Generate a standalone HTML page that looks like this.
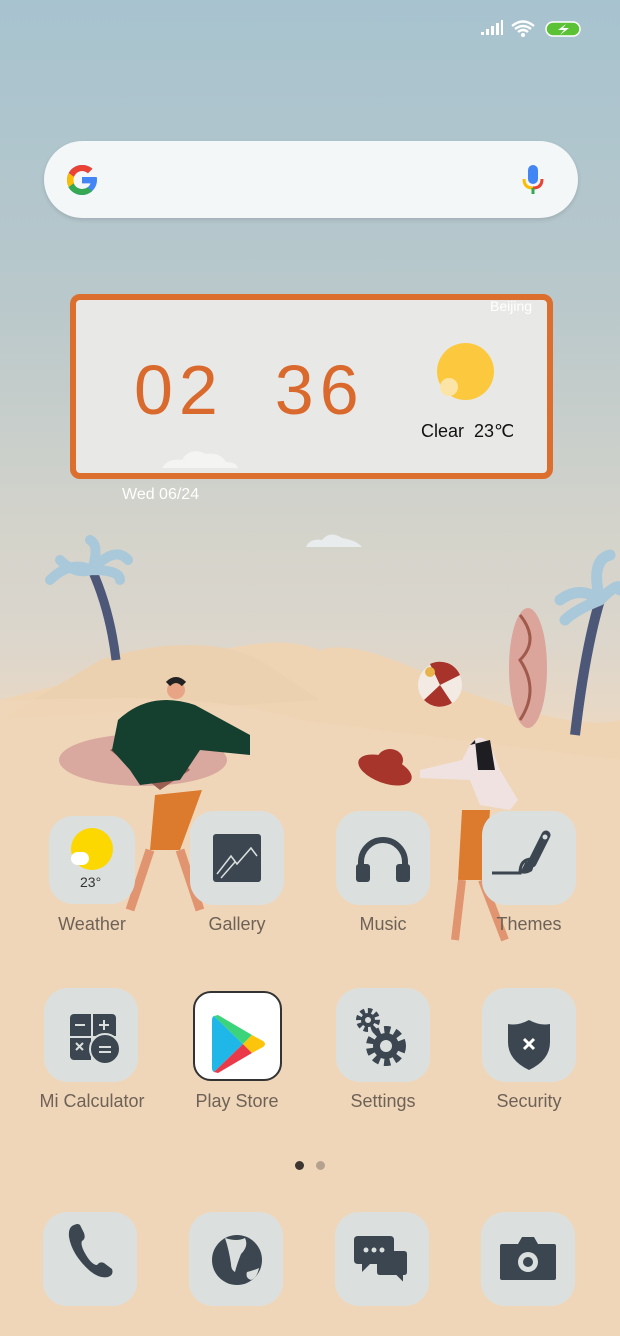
<!DOCTYPE html>
<html><head><meta charset="utf-8"><style>
*{margin:0;padding:0;box-sizing:border-box}
body{width:620px;height:1336px;overflow:hidden;position:relative;font-family:"Liberation Sans",sans-serif;
background:linear-gradient(180deg,#a7c3cf 0px,#b9c8cb 300px,#d3d3cb 520px,#dcd6cc 640px,#efd9c0 760px,#f3d8ba 1000px,#f6d6b5 1336px)}
.abs{position:absolute}
.tile{position:absolute;width:94px;height:94px;border-radius:24px;background:#dbe0de}
.lbl{position:absolute;width:150px;text-align:center;font-size:18px;color:#6e6258}
</style></head><body>
<!-- scene -->
<svg class="abs" style="left:0;top:0" width="620" height="1336">
<path d="M0 700 C80 680 150 660 220 650 C270 640 290 640 320 650 C350 640 400 660 460 690 C520 710 580 730 620 720 L620 1336 L0 1336Z" fill="#efd4b4"/>
<path d="M100 660 C160 640 220 640 260 660 L320 700 L0 720Z" fill="#ecd1b0"/>
<path d="M0 700 C100 700 200 690 300 720 L620 760 L620 1336 L0 1336Z" fill="#f1d7b9" opacity=".7"/>
<path d="M306 547 Q310 538 322 540 Q330 530 342 538 Q356 540 362 547Z" fill="#e8ecec"/>
<path d="M160 468 Q165 455 180 457 Q190 443 205 455 Q220 455 238 467Z" fill="#eef0ee"/>
<!-- palms -->
<path d="M92 570 Q110 610 116 660" stroke="#4d5878" stroke-width="9" fill="none"/>
<path d="M92 570 Q70 560 50 580 M92 570 Q100 545 90 540 M92 570 Q115 545 128 560 M92 570 Q120 570 120 580 M92 570 Q75 575 60 560" stroke="#a9c8d9" stroke-width="10" fill="none" stroke-linecap="round"/>
<path d="M600 600 Q585 650 575 735" stroke="#4d5878" stroke-width="10" fill="none"/>
<path d="M600 600 Q580 585 560 600 M600 600 Q590 560 610 555 M600 600 Q620 580 620 590 M600 600 Q575 610 565 620" stroke="#a9c8d9" stroke-width="11" fill="none" stroke-linecap="round"/>
<!-- surfboard right -->
<ellipse cx="528" cy="668" rx="19" ry="60" fill="#dba59b"/>
<path d="M520 615 Q540 640 520 660 Q540 690 520 720" stroke="#a05a4c" stroke-width="3" fill="none"/>
<!-- ball -->
<circle cx="440" cy="685" r="22" fill="#f3ebe3"/>
<path d="M440 685 L430 664 A22 22 0 0 1 460 675Z M440 685 L452 703 A22 22 0 0 1 424 700Z" fill="#a7332a"/>
<circle cx="430" cy="672" r="5" fill="#e8b34a"/>
<!-- man -->
<ellipse cx="143" cy="760" rx="84" ry="26" fill="#d9a89e"/>
<path d="M110 750 Q150 730 190 770 L160 790Z" fill="#9a5e52"/>
<path d="M155 795 L150 850 L180 850 L202 790Z" fill="#dc7a2e"/>
<path d="M150 850 L130 910 M180 850 L200 910" stroke="#e09570" stroke-width="9"/>
<path d="M118 720 Q150 690 195 705 L250 735 L250 755 L200 750 L180 780 L140 785 L130 770 L112 750Z" fill="#153f2f"/>
<circle cx="176" cy="690" r="9" fill="#e8a585"/><path d="M168 684 Q176 676 184 684" stroke="#222" stroke-width="6" fill="none"/>
<!-- woman -->
<path d="M470 745 Q480 730 490 745 L500 770 L518 800 L510 810 L480 805 L470 780 L420 778 L420 770 L462 760Z" fill="#efe2e0"/>
<path d="M470 745 L475 740 L478 770 L495 770 L490 740 Z" fill="#1e1d22"/>
<path d="M462 810 L458 880 L485 880 L490 810Z" fill="#dc7a2e"/>
<path d="M462 880 L455 940 M482 880 L505 940" stroke="#e09570" stroke-width="8"/>
<ellipse cx="385" cy="770" rx="28" ry="13" fill="#a7352b" transform="rotate(20 385 770)"/>
<ellipse cx="390" cy="760" rx="13" ry="11" fill="#a7352b"/>
</svg>

<!-- status bar -->
<svg class="abs" style="left:478px;top:18px" width="110" height="22">
<path d="M3 17h3v-3H3zM8 17h3v-6H8zM13 17h3v-9h-3zM18 17h3v-12h-3zM23 17h2v-15h-2z" fill="#fff"/>
<path d="M34 8 Q45 -1 56 8 M37 11 Q45 5 53 11 M40 14 Q45 10 50 14" stroke="#fff" stroke-width="2.4" fill="none"/><circle cx="45" cy="17" r="2" fill="#fff"/>
<rect x="68" y="4" width="34" height="14" rx="7" fill="#5bc236" stroke="#fff" stroke-width="1.5"/>
<path d="M88 6 L80 12 L86 12 L82 17 L91 10 L85 10Z" fill="#fff"/>
</svg>

<!-- search -->
<div class="abs" style="left:44px;top:141px;width:534px;height:77px;border-radius:39px;background:#f4f7f8;box-shadow:0 2px 4px rgba(0,0,0,.12)"></div>
<svg class="abs" style="left:64px;top:162px" width="36" height="36" viewBox="0 0 48 48">
<path d="M43.6 20H24v8.5h11.3C34 33 29.6 36 24 36c-6.6 0-12-5.4-12-12s5.4-12 12-12c3 0 5.8 1.1 7.9 3l6-6C34.3 5.7 29.4 4 24 4 13 4 4 13 4 24s9 20 20 20 20-9 20-20c0-1.3-.1-2.7-.4-4z" fill="#4285f4"/>
<path d="M6.3 14.7l7 5.1C15 15.6 19.1 12 24 12c3 0 5.8 1.1 7.9 3l6-6C34.3 5.7 29.4 4 24 4 16.3 4 9.7 8.3 6.3 14.7z" fill="#ea4335"/>
<path d="M24 44c5.2 0 9.9-2 13.4-5.2l-6.2-5.2C29.2 35.1 26.7 36 24 36c-5.2 0-9.6-3.3-11.3-8l-7 5.4C9.1 39.6 16 44 24 44z" fill="#34a853"/>
<path d="M6.3 14.7l7 5.1c-.8 2.2-.8 5 0 8.2l-7 5.4C4.8 30.5 4 27.3 4 24s.8-6.5 2.3-9.3z" fill="#fbbc05"/>
</svg>
<svg class="abs" style="left:521px;top:163px" width="24" height="34">
<rect x="7" y="2" width="10" height="19" rx="5" fill="#4285f4"/>
<path d="M3 16 Q3 25 12 25" stroke="#fbbc05" stroke-width="3" fill="none"/><path d="M21 16 Q21 25 12 25" stroke="#ea4335" stroke-width="3" fill="none"/>
<rect x="10.5" y="25" width="3" height="6" fill="#34a853"/>
</svg>

<!-- clock widget -->
<div class="abs" style="left:70px;top:294px;width:483px;height:185px;border:6px solid #dc6f2e;border-radius:10px;background:#e8e9e7"></div>
<div class="abs" style="left:490px;top:298px;font-size:14px;color:#fff">Beijing</div>
<div class="abs" style="left:134px;top:350px;font-size:70px;color:#d9692c;letter-spacing:6px;font-weight:300">02&nbsp;&nbsp;36</div>
<div class="abs" style="left:437px;top:343px;width:57px;height:57px;border-radius:50%;background:#fcc93e"></div>
<div class="abs" style="left:440px;top:378px;width:18px;height:18px;border-radius:50%;background:#fbe4a6"></div>
<div class="abs" style="left:421px;top:421px;font-size:18px;color:#111">Clear&nbsp; 23℃</div>
<svg class="abs" style="left:160px;top:444px" width="80" height="26"><path d="M2 24 Q8 14 22 16 Q30 2 46 10 Q60 8 66 18 Q76 18 78 24Z" fill="#f4f4f2"/></svg>
<div class="abs" style="left:122px;top:486px;font-size:16px;color:#fff">Wed 06/24</div>

<!-- row 1 -->
<div class="tile" style="left:49px;top:816px;width:86px;height:88px"></div>
<div class="abs" style="left:71px;top:828px;width:42px;height:42px;border-radius:50%;background:#fdd700"></div>
<div class="abs" style="left:71px;top:852px;width:18px;height:13px;border-radius:8px;background:#fff"></div>
<div class="abs" style="left:80px;top:874px;font-size:14px;color:#333">23°</div>
<div class="tile" style="left:190px;top:811px"></div>
<svg class="abs" style="left:213px;top:834px" width="48" height="48"><rect x="0" y="0" width="48" height="48" rx="3" fill="#3b4650"/><path d="M4 40 L18 22 L24 30 L38 14 L44 22 M8 44 L22 28" stroke="#dbe0de" stroke-width="1.5" fill="none"/></svg>
<div class="tile" style="left:336px;top:811px"></div>
<svg class="abs" style="left:353px;top:834px" width="60" height="50"><path d="M8 34 V28 A22 22 0 0 1 52 28 V34" stroke="#3b4650" stroke-width="6" fill="none"/><rect x="3" y="30" width="14" height="18" rx="3" fill="#3b4650"/><rect x="43" y="30" width="14" height="18" rx="3" fill="#3b4650"/></svg>
<div class="tile" style="left:482px;top:811px"></div>
<svg class="abs" style="left:490px;top:829px" width="70" height="52"><path d="M56 6 L42 34" stroke="#3b4650" stroke-width="9" stroke-linecap="round"/><circle cx="55" cy="8" r="2.5" fill="#dbe0de"/><path d="M42 30 Q30 30 30 44 L2 44" stroke="#3b4650" stroke-width="3" fill="none"/><path d="M36 32 Q46 34 42 42 Q36 46 30 44Z" fill="#3b4650"/></svg>
<div class="lbl" style="left:17px;top:914px">Weather</div>
<div class="lbl" style="left:162px;top:914px">Gallery</div>
<div class="lbl" style="left:308px;top:914px">Music</div>
<div class="lbl" style="left:454px;top:914px">Themes</div>

<!-- row 2 -->
<div class="tile" style="left:44px;top:988px"></div>
<svg class="abs" style="left:68px;top:1012px" width="52" height="52"><rect x="2" y="2" width="46" height="46" rx="4" fill="#3b4650"/><path d="M24 2V48M2 25H48" stroke="#dbe0de" stroke-width="2"/><circle cx="37" cy="37" r="15" fill="#3b4650" stroke="#dbe0de" stroke-width="2"/><path d="M7 13h10M31 13h10M36 8v10M8 31l7 7M15 31l-7 7M31 35h12M31 40h12" stroke="#dbe0de" stroke-width="2"/></svg>
<div class="abs" style="left:193px;top:991px;width:89px;height:90px;border-radius:18px;background:#fff;border:2px solid #333"></div>
<svg class="abs" style="left:211px;top:1014px" width="56" height="60" viewBox="0 0 56 60"><path d="M3 2 L32 30 L3 58 Q1 57 1 54 V6 Q1 3 3 2Z" fill="#1fb7e8"/><path d="M3 2 L32 30 L41 21 L7 1Z" fill="#3bd47a"/><path d="M3 58 L32 30 L41 39 L7 59Z" fill="#ea3a4a"/><path d="M41 21 L52 27 Q56 30 52 33 L41 39 L32 30Z" fill="#fcc40a"/></svg>
<div class="tile" style="left:336px;top:988px"></div>
<svg class="abs" style="left:354px;top:1006px" width="60" height="60"><circle cx="14" cy="14" r="9" fill="none" stroke="#3b4650" stroke-width="6" stroke-dasharray="4 3"/><circle cx="14" cy="14" r="7" fill="#3b4650"/><circle cx="14" cy="14" r="3" fill="#dbe0de"/><circle cx="32" cy="40" r="16" fill="none" stroke="#3b4650" stroke-width="8" stroke-dasharray="6 4.5"/><circle cx="32" cy="40" r="13" fill="#3b4650"/><circle cx="32" cy="40" r="6" fill="#dbe0de"/></svg>
<div class="tile" style="left:482px;top:988px"></div>
<svg class="abs" style="left:506px;top:1018px" width="46" height="54"><path d="M23 2 Q34 8 44 6 V24 Q44 42 23 52 Q2 42 2 24 V6 Q12 8 23 2Z" fill="#3b4650"/><path d="M18 21l10 10M28 21l-10 10" stroke="#fff" stroke-width="3"/></svg>
<div class="lbl" style="left:17px;top:1091px">Mi Calculator</div>
<div class="lbl" style="left:162px;top:1091px">Play Store</div>
<div class="lbl" style="left:308px;top:1091px">Settings</div>
<div class="lbl" style="left:454px;top:1091px">Security</div>

<!-- dots -->
<div class="abs" style="left:295px;top:1161px;width:9px;height:9px;border-radius:50%;background:#3d3530"></div>
<div class="abs" style="left:316px;top:1161px;width:9px;height:9px;border-radius:50%;background:#b4a28f"></div>

<!-- dock -->
<div class="tile" style="left:43px;top:1212px"></div>
<svg class="abs" style="left:66px;top:1281px;margin-top:-60px" width="50" height="60"><path d="M8 4 Q2 6 3 16 Q6 34 24 50 Q34 58 42 56 Q48 54 46 48 L38 42 Q34 40 31 44 Q26 44 20 34 Q14 24 16 20 Q20 18 18 12 L14 4 Q12 2 8 4Z" fill="#3b4650"/></svg>
<div class="tile" style="left:189px;top:1212px"></div>
<svg class="abs" style="left:211px;top:1234px" width="52" height="52"><circle cx="26" cy="26" r="25" fill="#3b4650"/><path d="M14 4 Q26 8 34 4 Q38 12 30 20 Q26 30 24 38 Q20 36 20 30 Q18 16 14 4Z" fill="#dbe0de"/><path d="M36 38 Q44 36 48 34 Q46 44 40 46 Q34 44 36 38Z" fill="#dbe0de"/></svg>
<div class="tile" style="left:335px;top:1212px"></div>
<svg class="abs" style="left:354px;top:1234px" width="58" height="54"><path d="M22 16 H50 Q54 16 54 20 V38 Q54 42 50 42 V50 L42 42 H26 Q22 42 22 38Z" fill="#3b4650" stroke="#dbe0de" stroke-width="2"/><path d="M4 2 H36 Q40 2 40 6 V26 Q40 30 36 30 H16 L8 38 V30 H4 Q0 30 0 26 V6 Q0 2 4 2Z" fill="#3b4650"/><circle cx="12" cy="16" r="2.5" fill="#dbe0de"/><circle cx="20" cy="16" r="2.5" fill="#dbe0de"/><circle cx="28" cy="16" r="2.5" fill="#dbe0de"/></svg>
<div class="tile" style="left:481px;top:1212px"></div>
<svg class="abs" style="left:500px;top:1236px" width="56" height="44"><path d="M18 8 L22 1 H34 L38 8 H54 Q56 8 56 10 V42 Q56 44 54 44 H2 Q0 44 0 42 V10 Q0 8 2 8Z" fill="#3b4650"/><circle cx="28" cy="26" r="10" fill="#dbe0de"/><circle cx="28" cy="26" r="5" fill="#3b4650"/></svg>
</body></html>
